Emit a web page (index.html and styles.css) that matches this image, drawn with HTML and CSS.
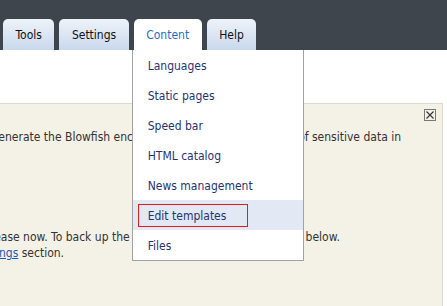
FILE: index.html
```html
<!DOCTYPE html>
<html lang="en">
<head>
    <meta charset="UTF-8">
    <meta name="viewport" content="width=device-width, initial-scale=1.0">
    <title>Admin panel</title>
    <link rel="stylesheet" href="styles.css">
</head>
<body>
    <div id="topbar">
        <ul class="tabs">
            <li class="tab">Tools</li>
            <li class="tab">Settings</li>
            <li class="tab active">Content
                <ul class="dropdown">
                    <li>Languages</li>
                    <li>Static pages</li>
                    <li>Speed bar</li>
                    <li>HTML catalog</li>
                    <li>News management</li>
                    <li class="hover"><span class="marked">Edit templates</span></li>
                    <li>Files</li>
                </ul>
            </li>
            <li class="tab">Help</li>
        </ul>
    </div>

    <div id="content">
        <div class="notice">
            <span class="close">
                <svg width="10" height="10" viewBox="0 0 10 10"><path d="M1.5 1.5 L8.5 8.5 M8.5 1.5 L1.5 8.5" stroke="#333" stroke-width="1.1" fill="none"/></svg>
            </span>
            <p class="first">Re-generate the Blowfish encryption keys, used for storage of sensitive data in</p>
            <p>Increase now. To back up the database, use the backup tools below.<br><a href="#">Settings</a> section.</p>
        </div>
    </div>
</body>
</html>
```

FILE: styles.css
```css
body {
    margin: 0;
    font-family: "DejaVu Sans Condensed", "DejaVu Sans", sans-serif;
    font-stretch: condensed;
    font-size: 12px;
    color: #333;
    background-color: #fff;
    overflow: hidden;
}
#topbar {
    height: 50px;
    background-color: #3e454d;
    display: flex;
    align-items: flex-end;
}
.tabs {
    list-style: none;
    margin: 0 0 0 3px;
    padding: 0;
    display: flex;
    gap: 5px;
}
.tab {
    position: relative;
    height: 31px;
    box-sizing: border-box;
    padding: 2px 12.5px 0;
    line-height: 29px;
    color: #111;
    border-radius: 5px 5px 0 0;
    background: linear-gradient(#eef3fa, #c9d8ec);
}
.tab.active {
    background: #fff;
    color: #1e6fc8;
}
.dropdown {
    list-style: none;
    margin: 0;
    padding: 0;
    position: absolute;
    top: 100%;
    left: -2px;
    width: 172px;
    box-sizing: border-box;
    background-color: #fff;
    border: 1px solid #a3a3a3;
    border-top: none;
    z-index: 5;
}
.dropdown li {
    height: 30px;
    box-sizing: border-box;
    display: flex;
    align-items: center;
    padding: 2px 0 0 15px;
    color: #1f3473;
    line-height: 16px;
}
.dropdown li.hover {
    background-color: #e2e9f4;
    padding-top: 0;
}
.marked {
    display: inline-block;
    box-sizing: border-box;
    width: 110px;
    height: 23px;
    line-height: 23px;
    margin-left: -10px;
    padding-left: 9px;
    border: 1px solid #e21b1b;
}
#content {
    padding-top: 53px;
}
.notice {
    position: relative;
    margin: 0 4px 0 -40px;
    padding: 25px 36px 45px 13px;
    background-color: #f4f1e6;
    border: 1px solid #dcd9cf;
    border-bottom: none;
    line-height: 16px;
    white-space: nowrap;
}
.notice p {
    margin: 0;
}
.notice p.first {
    margin-bottom: 84px;
}
.notice a {
    color: #1a5cb0;
}
.close {
    position: absolute;
    top: 5px;
    right: 6px;
    width: 12px;
    height: 12px;
    box-sizing: border-box;
    border: 1px solid #777;
    display: flex;
    align-items: center;
    justify-content: center;
}
.close svg {
    display: block;
}
```
